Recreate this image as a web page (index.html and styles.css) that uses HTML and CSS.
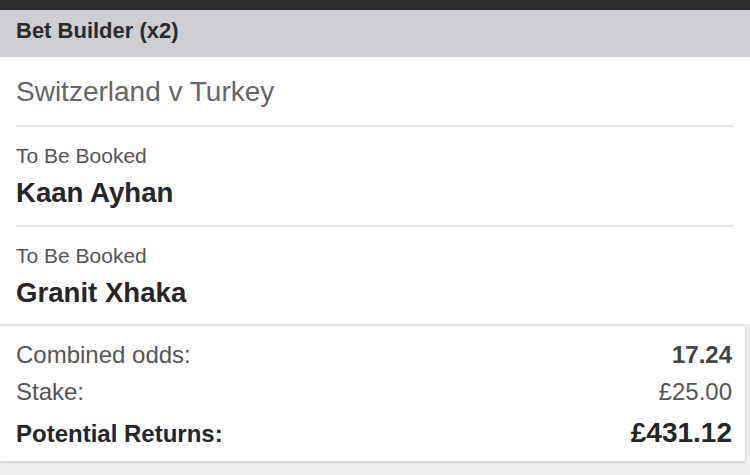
FILE: index.html
```html
<!DOCTYPE html>
<html lang="en">
<head>
<meta charset="utf-8">
<title>Bet Builder</title>
<link rel="stylesheet" href="styles.css">
</head>
<body>
<div class="topbar"></div>
<div class="header">Bet Builder (x2)</div>
<div class="legs">
  <div class="match">Switzerland v Turkey</div>
  <div class="leg">
    <div class="market">To Be Booked</div>
    <div class="selection">Kaan Ayhan</div>
  </div>
  <div class="leg last">
    <div class="market">To Be Booked</div>
    <div class="selection">Granit Xhaka</div>
  </div>
</div>
<div class="summary">
  <div class="row odds"><span class="label">Combined odds:</span><span class="value">17.24</span></div>
  <div class="row stake"><span class="label">Stake:</span><span class="value">£25.00</span></div>
  <div class="row returns"><span class="label">Potential Returns:</span><span class="value">£431.12</span></div>
</div>
</body>
</html>
```
FILE: styles.css
```css
html, body {
  margin: 0;
  padding: 0;
}
body {
  width: 750px;
  height: 475px;
  overflow: hidden;
  background: #efeff2;
  font-family: "Liberation Sans", Arial, Helvetica, sans-serif;
}
.topbar {
  height: 10px;
  background: #2e2c2d;
}
.header {
  height: 47px;
  box-sizing: border-box;
  padding: 10px 16px 0;
  background: #cdced2;
  color: #2b2b2b;
  font-size: 22px;
  line-height: 22px;
  font-weight: bold;
}
.legs {
  background: #fff;
  padding: 0 16px;
}
.match {
  padding: 21px 0 19px;
  font-size: 28px;
  line-height: 28px;
  color: #666;
  border-bottom: 2px solid #e6e6e8;
}
.leg {
  padding: 18px 0 18px;
  border-bottom: 2px solid #e6e6e8;
}
.leg.last {
  border-bottom: none;
}
.market {
  font-size: 21px;
  line-height: 21px;
  color: #555;
}
.selection {
  margin-top: 13px;
  font-size: 27.6px;
  line-height: 27.6px;
  font-weight: bold;
  color: #262626;
}
.summary {
  width: 745px;
  box-sizing: border-box;
  background: #fff;
  border-top: 2px solid #e4e4e6;
  padding: 16.4px 13px 13.4px 16px;
  box-shadow: 0 1px 3px rgba(0, 0, 0, 0.16);
  display: flex;
  flex-direction: column;
}
.row {
  display: flex;
  justify-content: space-between;
  align-items: baseline;
  font-size: 24px;
  line-height: 24px;
  color: #555;
}
.stake {
  margin-top: 13.3px;
}
.returns {
  margin-top: 15px;
  line-height: 28px;
  color: #262626;
  font-weight: bold;
}
.odds .value {
  font-weight: bold;
  color: #444;
}
.returns .value {
  font-size: 28px;
}
```
